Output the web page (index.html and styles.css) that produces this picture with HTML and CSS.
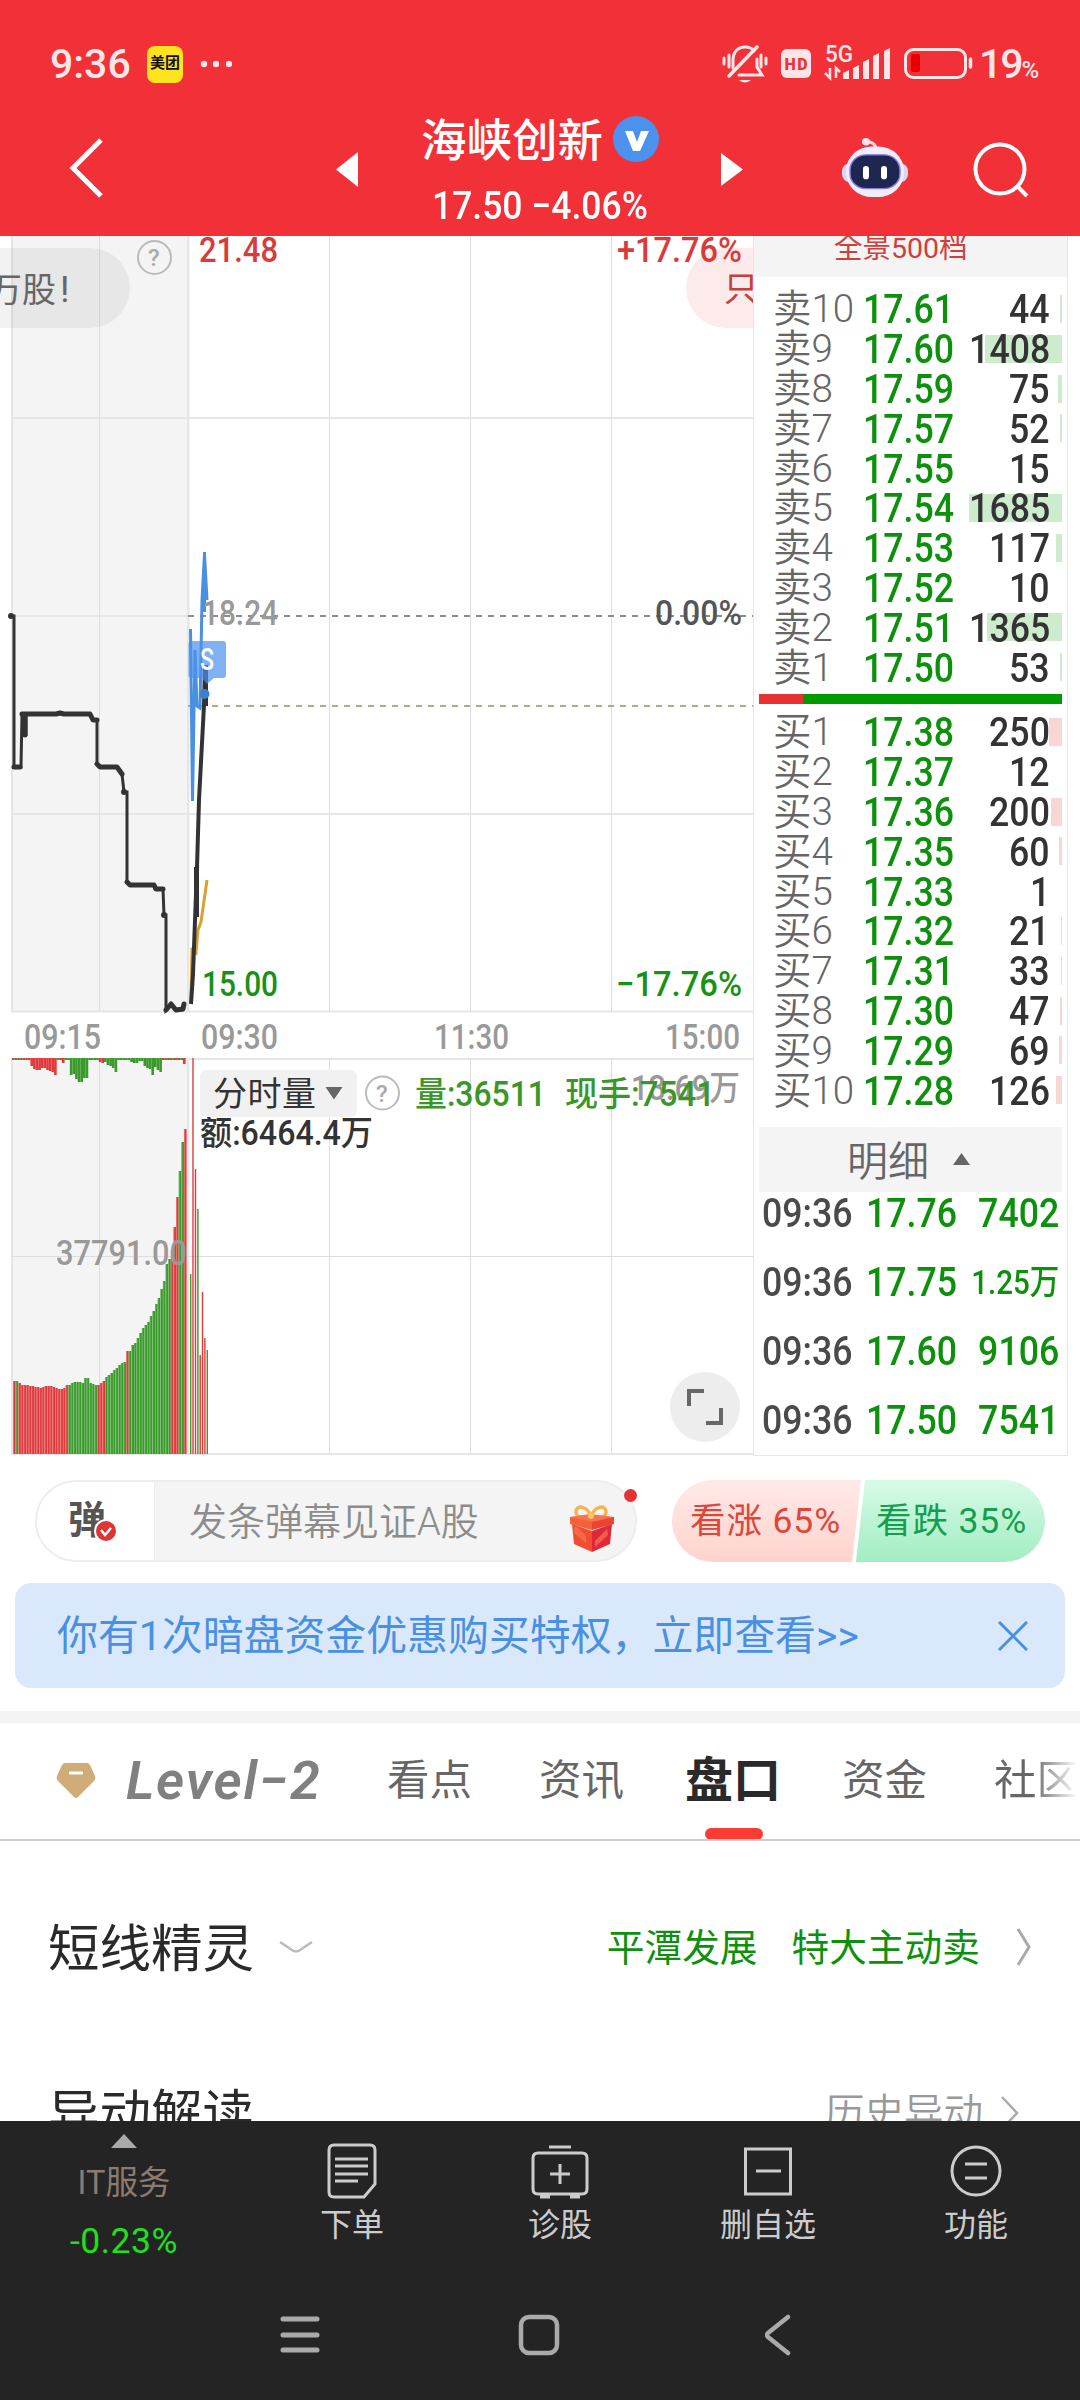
FILE: index.html
```
<!DOCTYPE html>
<html lang="zh-CN">
<head>
  <meta charset="UTF-8">
  <title>海峡创新 分时</title>
  <meta name="viewport" content="width=device-width, initial-scale=1.0">
  <link rel="stylesheet" href="styles.css">
</head>
<body>

  <header class="header">
    <div class="status">
      <span class="clock">9:36</span>
      <span class="app-badge">美团</span>
      <svg class="dots" width="32" height="8"><circle cx="4" cy="4" r="3.2"/><circle cx="16" cy="4" r="3.2"/><circle cx="29" cy="4" r="3.2"/></svg>
      <svg class="status-icons" width="254" height="40" viewBox="722 47 254 40">
        <g fill="none" stroke="#ffe6e6" stroke-width="3" stroke-linecap="round">
          <path d="M733 71v-8c0-8 5-13 12-13 4 0 7 1 9 4M757 62v8l5 8H739"/>
          <path d="M729 79l28-29" stroke-width="3.5"/>
          <path d="M724 61v6M729 58v12M761 58v12M766 61v6"/>
        </g>
        <path d="M739 83h12q-6 5-12 0z" fill="#ffe6e6"/>
        <rect x="781" y="52" width="30" height="29" rx="6" fill="#ffe6e6"/>
        <text x="784.5" y="72.500" class="hd" textLength="23">HD</text>
        <text x="825" y="65" class="net" textLength="28" lengthAdjust="spacingAndGlyphs">5G</text>
        <path d="M830 71v10l-5-5M836 81V71l4 4" fill="none" stroke="#ffe6e6" stroke-width="2.5"/>
        <path d="M843 76l6-3v9h-6zM853 71l6-3v14h-6zM863 65l6-3v20h-6zM873 59l6-3v26h-6zM884 54l6-3v31h-6z" fill="#ffe6e6"/>
        <rect x="905.500" y="52.500" width="60" height="28" rx="8" fill="none" stroke="#ffe6e6" stroke-width="3"/>
        <rect x="911" y="57" width="9" height="18" rx="2" fill="#e60000"/>
        <path d="M970.500 62v8" stroke="#ffe6e6" stroke-width="3.500" stroke-linecap="round"/>
      </svg>
      <span class="battery">19<small>%</small></span>
    </div>
    <div class="titlebar">
      <svg class="back" width="36" height="60" viewBox="0 0 36 60"><path d="M33 2L5 30l28 28" fill="none" stroke="#fff" stroke-width="5"/></svg>
      <svg class="prev" width="22" height="35"><path d="M22 0v35L0 17.500z" fill="#fff"/></svg>
      <div class="stock">
        <div class="stock-name"><span>海峡创新</span>
          <svg width="46" height="46" viewBox="0 0 46 46"><circle cx="23" cy="23" r="23" fill="#4a92ee"/><path d="M12 15h8l4 11 4-11h8L27 35h-7z" fill="#fff"/></svg>
        </div>
        <div class="stock-price">17.50 −4.06%</div>
      </div>
      <svg class="next" width="22" height="33"><path d="M0 0v33l22-16.500z" fill="#fff"/></svg>
      <svg class="robot" width="66" height="62" viewBox="842 140 66 66" preserveAspectRatio="none">
        <path d="M866 145q10 0 10 9" fill="none" stroke="#f6d5e4" stroke-width="3"/>
        <circle cx="866" cy="145" r="4" fill="#fbe4ee"/>
        <rect x="842" y="168" width="66" height="20" rx="8" fill="#d8d5f5"/>
        <rect x="846" y="150" width="58" height="54" rx="26" fill="#eeeefc"/>
        <rect x="850" y="159" width="50" height="36" rx="16" fill="#1d2750" stroke="#8e7be8" stroke-width="1.500"/>
        <rect x="863" y="171" width="6" height="14" rx="3" fill="#fff"/>
        <rect x="881" y="171" width="6" height="14" rx="3" fill="#fff"/>
      </svg>
      <svg class="search" width="56" height="56" viewBox="0 0 56 56"><circle cx="27" cy="27" r="24.500" fill="none" stroke="#fff" stroke-width="4"/><path d="M44 44l10 10" stroke="#fff" stroke-width="4"/></svg>
    </div>
  </header>

  <main class="quote">
    <svg class="chart" width="753" height="1222" viewBox="0 236 753 1222">
      <rect x="11" y="236" width="179" height="775" fill="#f4f4f4"/>
      <rect x="11" y="1058" width="179" height="396" fill="#f4f4f4"/>
      <g stroke="#e6e6e6" stroke-width="2">
        <path d="M12 236v775M188 236v775M12 1058v396M188 1058v396M11 418H753M11 616H188M11 814H753M11 1011.500H753M11 1059H753M11 1454H753"/>
        <path d="M99.500 236v775M329.500 236v775M470.500 236v775M611.500 236v775M99.500 1058v396M329.500 1058v396M470.500 1058v396M611.500 1058v396M11 1256.500H753" stroke="#dedede" stroke-width="1"/>
      </g>
      <path d="M188 616H753" stroke="#8c8c8c" stroke-width="2" stroke-dasharray="6 6"/>
      <path d="M188 706H753" stroke="#b5a886" stroke-width="2" stroke-dasharray="6 6"/>

      <!-- danmu bubbles -->
      <rect x="-60" y="248" width="190" height="80" rx="40" fill="rgba(0,0,0,.05)"/>
      <text x="-12" y="302" class="t cn" fill="#666" font-size="34">万股</text>
      <text x="60" y="302" class="t cn" fill="#666" font-size="37">!</text>
      <rect x="686" y="248" width="160" height="80" rx="40" fill="#fdeaea"/>
      <text x="724" y="301" class="t cn" fill="#c4403c" font-size="34">只</text>

      <g id="volume"></g>

      <path d="M191 1000l1-50 4 3 2-23 3-8 6-42" fill="none" stroke="#d9a02e" stroke-width="3"/>
      <path d="M11 616h3v151h7l1-53h4v22M27 714h63l3 6h4v44l3 3h17l5 7 2 18h3v90l3 3h24l1 4h8l1 26h2v95l5-6 4 6h7l1-5" fill="none" stroke="#333" stroke-width="3"/>
      <path d="M14 767h6M22 714h34l4-1 4 1h26l3 6h4M97 764l3 3h17l5 7M127 882l3 3h24l2 4h7M166 1010l5-6 5 6 7-1 1-5M25 715v20" fill="none" stroke="#333" stroke-width="5" stroke-linecap="round" stroke-linejoin="round"/>
      <circle cx="11" cy="616" r="3" fill="#333"/><circle cx="124" cy="792" r="3" fill="#333"/><circle cx="164" cy="915" r="3" fill="#333"/>
      <path d="M191 1004l2-30 4-107 2-67 5-95 1-40" fill="none" stroke="#333" stroke-width="4"/>
      <path d="M196.500 867v50M205.500 665v41" fill="none" stroke="#333" stroke-width="5"/>
      <path d="M190.500 629l2 172 2.500-151 2 56 3 2 2-108 2.500-46 2.500 46M204.500 552v60" fill="none" stroke="#4a90e2" stroke-width="3"/>
      <path d="M191.500 641h31.500q3 0 3 3v31q0 3-3 3h-9l-7 6-5-6h-10.500q-3 0-3-3v-31q0-3 3-3z" fill="#4a92ee" fill-opacity=".7"/>
      <circle cx="204.500" cy="694" r="5" fill="#3f7fd0"/>
      <text x="200" y="670" class="t" fill="#fff" font-size="31" textLength="14" lengthAdjust="spacingAndGlyphs">S</text>

      <g class="t" font-size="34.500" id="labels"></g>

      <g fill="none" stroke="#bbb" stroke-width="2"><circle cx="154.500" cy="257.500" r="16.500"/><circle cx="382.500" cy="1093" r="16.500"/></g>
      <text x="148" y="266" class="t" font-size="24" fill="#aaa">?</text>
      <text x="376" y="1102" class="t" font-size="24" fill="#aaa">?</text>

      <rect x="200" y="1070" width="157" height="47" rx="6" fill="#f1f1f1"/>
      <text x="213" y="1106" class="t cn" font-size="34" fill="#333" textLength="103">分时量</text>
      <path d="M325.500 1087h17l-8.500 12.500z" fill="#666"/>

      <circle cx="705" cy="1407" r="35" fill="#ededed"/>
      <path d="M689 1406v-15h15M721 1408v15h-15" fill="none" stroke="#666" stroke-width="4"/>
    </svg>

    <aside class="book">
      <div class="book-head">全景500档</div>
      <div class="levels" id="asks"></div>
      <div class="ratio"><i></i></div>
      <div class="levels" id="bids"></div>
      <div class="detail-head"><span>明细</span> <svg width="17" height="12"><path d="M8.500 0L17 12H0z" fill="#666"/></svg></div>
      <div class="ticks" id="ticks"></div>
    </aside>
  </main>

  <section class="danmu">
    <div class="danmu-box">
      <div class="danmu-toggle">弹
        <svg class="danmu-check" width="24" height="24" viewBox="0 0 24 24"><circle cx="12" cy="12" r="11" fill="#e03434" stroke="#fff" stroke-width="2"/><path d="M7 11l4 5 6-7" fill="none" stroke="#fff" stroke-width="2.500"/></svg>
      </div>
      <div class="danmu-input">发条弹幕见证A股</div>
      <svg class="gift" width="48" height="50" viewBox="568 1504 48 50">
        <path d="M591 1518c-3-11-15-13-15-5 0 6 8 6 15 5 7 1 15 1 15-5 0-8-12-6-15 5z" fill="none" stroke="#f3b552" stroke-width="3.500"/>
        <path d="M572 1525l20 7v21l-18-8z" fill="#ef4e30"/>
        <path d="M612 1525l-20 7v21l18-8z" fill="#dd2a3a"/>
        <path d="M577 1528l9 9v7l-12-10v-6zM607 1530l-12 12v6l13-12z" fill="#f9744e" opacity=".7"/>
        <path d="M570 1518l22-1v14l-22-6z" fill="#f4603c"/>
        <path d="M592 1517l22 1v7l-22 6z" fill="#ea4433"/>
        <path d="M570 1518l20-3 24 3-22 5z" fill="#fa7350"/>
        <circle cx="591" cy="1517" r="3" fill="#f7c561"/>
      </svg>
      <i class="red-dot"></i>
    </div>
    <div class="vote">
      <div class="vote-up">看涨 65%</div>
      <div class="vote-down">看跌 35%</div>
    </div>
  </section>

  <div class="banner">
    <span>你有1次暗盘资金优惠购买特权，立即查看&gt;&gt;</span>
    <svg width="30" height="30"><path d="M1 1l28 28M29 1L1 29" stroke="#4a90e2" stroke-width="3"/></svg>
  </div>

  <nav class="tabs">
    <svg class="gem" width="40" height="40" viewBox="0 0 40 40"><path d="M9 2h22q2 0 3 2l5 11q1 3-1 5L22 36q-2 2-4 0L2 20q-2-2-1-5L6 4q1-2 3-2z" fill="#cfac78"/><path d="M13 12h14" stroke="#fff" stroke-width="3"/></svg>
    <span class="level">Level−2</span>
    <span>看点</span>
    <span>资讯</span>
    <span class="active">盘口</span>
    <span>资金</span>
    <span class="last">社区</span>
  </nav>

  <section class="rows">
    <div class="row">
      <h3>短线精灵</h3>
      <svg class="down" width="34" height="15"><path d="M1 2l12 8q4 3 8 0l12-8" fill="none" stroke="#bbb" stroke-width="2.500"/></svg>
      <div class="row-link green"><span>平潭发展</span><span>特大主动卖</span></div>
      <svg class="arrow" width="16" height="40"><path d="M2 2l11 18L2 38" fill="none" stroke="#aaa" stroke-width="3"/></svg>
    </div>
    <div class="row">
      <h3>异动解读</h3>
      <div class="row-link gray"><span>历史异动</span></div>
      <svg class="arrow2" width="19" height="34"><path d="M2 1l15 16L2 33" fill="none" stroke="#aaa" stroke-width="2.500"/></svg>
    </div>
  </section>

  <footer class="footer">
    <div class="toolbar">
      <div class="index">
        <svg width="26" height="14"><path d="M13 0l13 14H0z" fill="#aaa"/></svg>
        <span class="index-name">IT服务</span>
        <span class="index-change">-0.23%</span>
      </div>
      <div class="tool">
        <svg width="60" height="56" viewBox="0 0 60 56"><path d="M12 2h36q5 0 5 5v34L42 54H12q-5 0-5-5V7q0-5 5-5zM13 16h33M13 23h33M13 31h33M13 38h23"/></svg>下单
      </div>
      <div class="tool">
        <svg width="60" height="56" viewBox="0 0 60 56"><path d="M8 10h44q5 0 5 5v31q0 5-5 5H8q-5 0-5-5V15q0-5 5-5zM19 4h22M30 21v20M20 31h20M10 54h10M40 54h10"/></svg>诊股
      </div>
      <div class="tool">
        <svg width="60" height="56" viewBox="0 0 60 56"><path d="M7.500 6h45v45h-45zM18 28h25"/></svg>删自选
      </div>
      <div class="tool">
        <svg width="60" height="56" viewBox="0 0 60 56"><circle cx="30" cy="28" r="24"/><path d="M19 21h22M19 35h22"/></svg>功能
      </div>
    </div>
    <div class="sysnav">
      <svg width="40" height="42" viewBox="0 0 40 42"><path d="M3 5h34M3 21h34M3 36h34" stroke-width="5"/></svg>
      <svg width="42" height="42" viewBox="0 0 42 42"><rect x="3" y="3" width="36" height="36" rx="8"/></svg>
      <svg width="26" height="42" viewBox="0 0 26 42"><path d="M23 3L3 19q-2 2 0 4l20 16"/></svg>
    </div>
  </footer>

  <script src="script.js"></script>
</body>
</html>
```
FILE: styles.css
```
* {
  box-sizing: border-box;
}

body {
  margin: 0;
  width: 1080px;
  height: 2400px;
  overflow: hidden;
  display: flex;
  flex-direction: column;
  background: #fff;
  color: #333;
  font-family: Roboto, "Noto Sans CJK SC", sans-serif;
}

svg {
  display: block;
  flex: none;
}

/* header */

.header {
  height: 236px;
  flex: none;
  background: #f13038;
  color: #fff;
}

.status {
  height: 100px;
  padding: 28px 42px 0 50px;
  display: flex;
  align-items: center;
  color: #ffe6e6;
}

.clock {
  width: 97px;
  font-size: 41px;
  font-weight: 500;
}

.app-badge {
  width: 36px;
  height: 37px;
  border-radius: 8px;
  background: #ffe31f;
  color: #111;
  font-size: 15px;
  font-weight: 700;
  line-height: 34px;
  text-align: center;
  white-space: nowrap;
}

.dots {
  margin-left: 17px;
  fill: #ffe6e6;
}

.status-icons {
  margin-left: auto;
}

.hd {
  font: 900 16px Roboto, sans-serif;
  fill: #f13038;
}

.net {
  font: 500 24px Roboto, sans-serif;
  fill: #ffe6e6;
}

.battery {
  width: 59px;
  margin-left: 3px;
  font-size: 41px;
  font-weight: 500;
  letter-spacing: -2px;
  white-space: nowrap;
}

.battery small {
  font-size: 24px;
}

.titlebar {
  height: 136px;
  padding-top: 3px;
  display: flex;
  align-items: center;
}

.back {
  margin-left: 68px;
  margin-bottom: 3px;
}

.prev {
  margin-left: 232px;
}

.stock {
  width: 363px;
  height: 133px;
}

.stock-name {
  height: 72px;
  padding-left: 63px;
  display: flex;
  align-items: center;
  gap: 10px;
  font-size: 45.500px;
  font-weight: 500;
}

.stock-name span {
  padding-bottom: 5px;
}

.stock-price {
  height: 61px;
  padding-left: 74px;
  font-size: 39px;
  font-weight: 500;
  line-height: 62px;
  white-space: nowrap;
  transform: scaleX(.91);
  transform-origin: 74px 0;
}

.robot {
  margin-left: 99px;
  margin-bottom: 4px;
}

.search {
  margin-left: 65px;
}

/* chart and order book */

.quote {
  height: 1222px;
  flex: none;
  display: flex;
}

.t {
  font-family: Roboto, "Noto Sans CJK SC", sans-serif;
  font-weight: 500;
}

.cn {
  font-weight: 400;
}

.book {
  width: 315px;
  height: 1220px;
  border: 1px solid #e6e6e6;
  border-top: none;
}

.book-head {
  height: 41px;
  padding-left: 80px;
  background: #f4f4f4;
  color: #cf403c;
  font-size: 28.500px;
  line-height: 25px;
}

.levels {
  padding: 11px 5px 0;
}

#bids {
  padding-top: 7px;
}

.level-row {
  position: relative;
  height: 39.800px;
  padding: 3px 12px 0 14px;
  display: flex;
  align-items: center;
  line-height: 36px;
}

.level-row .name {
  width: 90px;
  flex: none;
  color: #666;
  font-size: 38.500px;
  font-weight: 350;
  white-space: nowrap;
}

.num {
  flex: none;
  font-size: 41px;
  font-weight: 500;
  white-space: nowrap;
  transform: scaleX(.87);
  transform-origin: 0 50%;
}

.green {
  color: #0d910d;
}

.price {
  width: 90px;
}

.level-row .qty,
.tick .vol {
  margin-left: auto;
  transform-origin: 100% 50%;
}

/* volume bar behind the quantity */
.level-row i {
  position: absolute;
  right: 0;
  top: 7px;
  height: 28px;
  background: #cdebcd;
  z-index: -1;
}

#bids .level-row i {
  background: #f9d6d6;
}

.ratio {
  height: 10px;
  margin: 8px 5px 0;
  background: #009a00;
}

.ratio i {
  display: block;
  width: 44px;
  height: 10px;
  background: #e63232;
}

.detail-head {
  height: 65px;
  margin: 18px 5px 0;
  padding-left: 88px;
  display: flex;
  align-items: center;
  gap: 24px;
  background: #f4f4f4;
  color: #666;
  font-size: 41px;
  font-weight: 350;
}

.detail-head span {
  padding-bottom: 3px;
}

.tick {
  height: 69px;
  padding: 0 8px;
  display: flex;
  align-items: center;
  line-height: 1;
}

.ticks {
  margin-top: -13px;
}

.tick .time {
  width: 104px;
  color: #4a4a4a;
}

.tick .small {
  font-size: 34px;
}

/* danmu line */

.danmu {
  height: 82px;
  margin: 22px 35px 0 35px;
  display: flex;
  justify-content: space-between;
  flex: none;
}

.danmu-box {
  position: relative;
  width: 602px;
  border: 2px solid #ededed;
  border-radius: 41px;
  display: flex;
  align-items: center;
  background: linear-gradient(90deg, #fff 117px, #ededed 117px, #ededed 118px, #f4f4f4 118px);
}

.danmu-toggle {
  position: relative;
  width: 117px;
  padding-left: 31px;
  padding-bottom: 9px;
  font-size: 38px;
  font-weight: 700;
  color: #555;
}

.danmu-check {
  position: absolute;
  left: 57px;
  bottom: 10px;
}

.danmu-input {
  margin-left: 35px;
  padding-bottom: 6px;
  font-size: 38px;
  font-weight: 350;
  color: #8c8c8c;
}

.gift {
  margin-left: auto;
  margin-right: 19px;
  margin-top: 14px;
}

.red-dot {
  position: absolute;
  right: -2px;
  top: 7px;
  width: 13px;
  height: 13px;
  border-radius: 50%;
  background: #e63232;
}

.vote {
  width: 373px;
  display: flex;
  font-size: 35.500px;
  line-height: 83px;
  letter-spacing: .9px;
  white-space: nowrap;
}

.vote-up {
  width: 189px;
  padding-left: 18px;
  border-radius: 41px 0 0 41px;
  background: linear-gradient(#ffeae8, #ffd3ce);
  clip-path: polygon(0 0, 100% 0, 180px 100%, 0 100%);
  color: #e0453a;
}

.vote-down {
  width: 189px;
  margin-left: -5px;
  padding-left: 20px;
  border-radius: 0 41px 41px 0;
  background: linear-gradient(#d8fae6, #a2edc2);
  clip-path: polygon(9px 0, 100% 0, 100% 100%, 0 100%);
  color: #12a050;
}

.banner {
  height: 105px;
  margin: 21px 15px 0;
  padding: 0 37px 0 42px;
  display: flex;
  flex: none;
  align-items: center;
  justify-content: space-between;
  border-radius: 16px;
  background: #dae8fb;
  color: #4a90e2;
  font-size: 40.900px;
}

.banner span {
  padding-bottom: 6px;
}

/* tabs */

.tabs {
  height: 130px;
  margin-top: 23px;
  padding-left: 56px;
  border-top: 12px solid #f4f4f4;
  border-bottom: 2px solid #ccc;
  display: flex;
  flex: none;
  align-items: center;
  font-size: 42.500px;
  line-height: 120px;
  color: #666;
  white-space: nowrap;
  overflow: hidden;
}

.tabs span {
  width: 85px;
  margin-right: 67px;
}

.tabs .level {
  width: 194px;
  margin-left: 30px;
  font-size: 54px;
  font-weight: 600;
  font-style: italic;
  letter-spacing: 1.800px;
  color: #808080;
}

.tabs .active {
  position: relative;
  width: 95px;
  margin-left: -6px;
  margin-right: 62px;
  font-size: 48px;
  font-weight: 700;
  color: #2a2a2a;
}

.active::after {
  content: "";
  position: absolute;
  left: 20px;
  bottom: 1px;
  width: 58px;
  height: 12px;
  border-radius: 6px;
  background: #fc3b33;
}

.tabs .last {
  margin-right: 0;
  background: linear-gradient(90deg, #666 45%, #fff 98%);
  -webkit-background-clip: text;
  background-clip: text;
  color: transparent;
}

/* list rows */

.rows {
  height: 280px;
  flex: none;
  overflow: hidden;
  padding-top: 24px;
}

.row {
  height: 165px;
  padding: 0 48px;
  display: flex;
  align-items: center;
}

.row h3 {
  margin: 0;
  padding-bottom: 7px;
  font-size: 51.500px;
  font-weight: 400;
  color: #2a2a2a;
}

.down {
  margin-left: 25px;
}

.row-link {
  margin-left: auto;
  padding-bottom: 7px;
  display: flex;
  gap: 34px;
  font-size: 37.700px;
}

.arrow {
  margin-left: 36px;
  margin-bottom: 2px;
}

.gray {
  color: #999;
  font-size: 39.500px;
  font-weight: 350;
}

.arrow2 {
  margin-left: 17px;
  margin-right: 13px;
}

/* bottom */

.footer {
  height: 279px;
  flex: none;
  background: #242424;
}

.toolbar {
  height: 160px;
  display: flex;
}

.index {
  width: 248px;
  padding-top: 13px;
  display: flex;
  flex-direction: column;
  align-items: center;
}

.index-name {
  margin-top: 13px;
  height: 44px;
  line-height: 44px;
  font-size: 32.500px;
  color: #8d7b70;
}

.index-change {
  margin-top: 15px;
  font-size: 35.500px;
  line-height: 42px;
  letter-spacing: .5px;
  color: #1fe01f;
}

.tool {
  width: 208px;
  padding-top: 22px;
  display: flex;
  flex-direction: column;
  align-items: center;
  font-size: 32px;
  line-height: 52px;
  color: #ccc;
}

.tool svg {
  fill: none;
  stroke: #ccc;
  stroke-width: 3;
}

.sysnav {
  height: 108px;
  padding-left: 280px;
  display: flex;
  align-items: center;
}

.sysnav svg {
  fill: none;
  stroke: #aaa;
  stroke-width: 4.500;
  stroke-linecap: round;
  stroke-linejoin: round;
}

.sysnav svg + svg {
  margin-left: 198px;
}

.sysnav svg:last-child {
  margin-left: 205px;
}
```
FILE: script.js
```
const asks = [
  ["卖10", "17.61", 44, 2], ["卖9", "17.60", 1408, 77], ["卖8", "17.59", 75, 4],
  ["卖7", "17.57", 52, 2], ["卖6", "17.55", 15, 0], ["卖5", "17.54", 1685, 93],
  ["卖4", "17.53", 117, 6], ["卖3", "17.52", 10, 0], ["卖2", "17.51", 1365, 75],
  ["卖1", "17.50", 53, 2]
];
const bids = [
  ["买1", "17.38", 250, 13], ["买2", "17.37", 12, 0], ["买3", "17.36", 200, 11],
  ["买4", "17.35", 60, 3], ["买5", "17.33", 1, 0], ["买6", "17.32", 21, 1],
  ["买7", "17.31", 33, 1], ["买8", "17.30", 47, 2], ["买9", "17.29", 69, 3],
  ["买10", "17.28", 126, 6]
];
const ticks = [["17.76", "7402"], ["17.75", "1.25万"], ["17.60", "9106"], ["17.50", "7541"]];

function levelRows(list) {
  return list.map(([name, price, qty, bar]) =>
    `<div class="level-row"><span class="name">${name}</span><span class="num price green">${price}</span><span class="num qty">${qty}</span><i style="width:${bar}px"></i></div>`
  ).join("");
}

document.getElementById("asks").innerHTML = levelRows(asks);
document.getElementById("bids").innerHTML = levelRows(bids);
document.getElementById("ticks").innerHTML = ticks.map(([price, vol]) =>
  `<div class="tick"><span class="num time">09:36</span><span class="num price green">${price}</span><span class="num green vol${vol.includes("万") ? " small" : ""}">${vol}</span></div>`
).join("");

// axis labels: text, x, baseline, width, color
const labels = [
  ["21.48", 199, 262, 79, "#d93a3a"], ["+17.76%", 617, 262, 125, "#d93a3a"],
  ["18.24", 202, 625, 76, "#999"], ["0.00%", 655, 625, 87, "#555"],
  ["15.00", 202, 996, 76, "#179117"], ["−17.76%", 616, 996, 126, "#179117"],
  ["09:15", 24, 1049, 77, "#999"], ["09:30", 201, 1049, 77, "#999"],
  ["11:30", 434, 1049, 75, "#999"], ["15:00", 665, 1049, 75, "#999"],
  ["37791.00", 56, 1265, 131, "#999"], ["13.69万", 631, 1100, 109, "#999"],
  ["量:36511", 415, 1106, 131, "#3a9629"], ["现手:7541", 565, 1106, 150, "#3a9629"],
  ["额:6464.4万", 200, 1145, 173, "#333"]
];
document.getElementById("labels").innerHTML = labels.map(([text, x, y, w, color]) =>
  `<text x="${x}" y="${y}" fill="${color}" textLength="${w}" lengthAdjust="spacingAndGlyphs">${text}</text>`
).join("");

// call auction volume, one bar every few seconds
const heights = [
  73, 73, 71, 69, 69, 69, 68, 68, 67, 67, 66, 67, 68, 68, 68, 67, 66, 65, 65, 66, 69, 69,
  71, 72, 72, 72, 71, 76, 76, 71, 70, 69, 69, 71, 73, 77, 79, 81, 84, 86, 89, 91, 92, 103,
  103, 109, 111, 116, 121, 126, 129, 132, 138, 143, 150, 156, 165, 173, 190, 195, 204,
  227, 257, 283, 312, 325
];
const unmatched = [
  1, 1, 1, 1, 1, 1, 1, 7, 10, 11, 11, 9, 9, 11, 12, 13, 16, 1, 1, 4, 1, 1, 16, 15, 20, 23,
  23, 19, 19, 1, 1, 1, 1, 3, 4, 3, 6, 7, 9, 13, 1, 1, 1, 1, 1, 3, 4, 4, 2, 2, 7, 9, 10, 16,
  8, 11, 13, 1, 1, 1, 1, 1, 1, 1, 1, 5
];
const colors = "rg" + "r".repeat(19) + "g".repeat(11) + "r".repeat(3) + "g".repeat(8) + "r" + "g".repeat(16) + "rrrggr";
const topColors = "rgrgrrrrrrrrrrrrrgrrgg" + "g".repeat(11) + "rr" + "g".repeat(22) + "rgrrgrrgr";
// bars after the open: x, top, color
const minutes = [
  [190, 1274, "g"], [192.3, 1058, "r"], [194.8, 1169, "r"], [197.200, 1209, "g"],
  [199.5, 1355, "r"], [201.8, 1292, "r"], [204.200, 1338, "r"], [206.600, 1350, "g"]
];
const fill = { r: "#e23a3c", g: "#3a9a2b" };
const step = 2.63;
let bars = "";
heights.forEach((h, i) => {
  const x = 13 + i * step;
  bars += `<rect x="${x}" y="${1454 - h}" width="${step}" height="${h}" fill="${fill[colors[i]]}"/>`;
  bars += `<rect x="${x}" y="${1454 - h}" width=".8" height="${h}" fill="#fff" opacity=".3"/>`;
  bars += `<rect x="${x - 1}" y="1058" width="${step}" height="${unmatched[i] + 1}" fill="${fill[topColors[i]]}"/>`;
});
minutes.forEach(([x, y, c]) => {
  bars += `<rect x="${x}" y="${y}" width="1.400" height="${1454 - y}" fill="${fill[c]}"/>`;
});
document.getElementById("volume").innerHTML = bars;
```
